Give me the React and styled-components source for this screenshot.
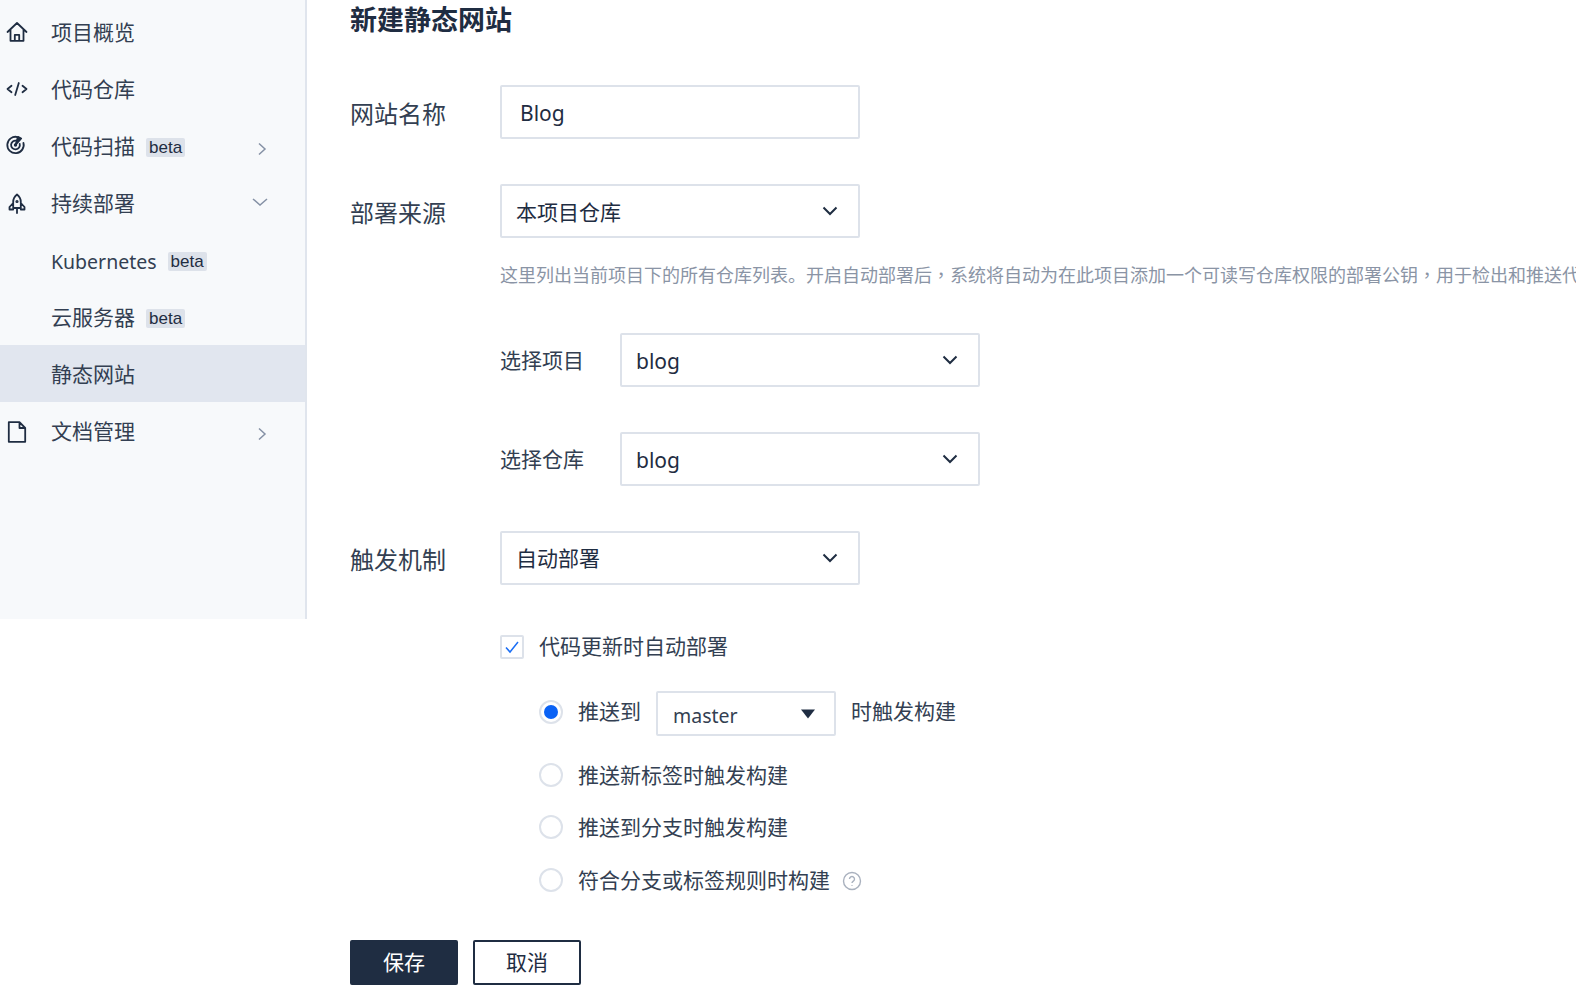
import React from "react";
import styled, { createGlobalStyle } from "styled-components";

const Global = createGlobalStyle`
  html, body { margin: 0; padding: 0; background: #fff; }
  body { font-family: "Noto Sans", "Noto Sans CJK SC", sans-serif; color: #1f2d42; }
  * { box-sizing: border-box; }
`;

const Page = styled.div`
  display: flex;
  align-items: flex-start;
  width: 1576px;
  height: 994px;
  overflow: hidden;
`;
const Sidebar = styled.nav`
  flex: none;
  width: 307px;
  height: 619px;
  padding-top: 3px;
  background: #f7f9fb;
  border-right: 2px solid #e0e5ed;
`;
const NavRow = styled.div`
  display: flex;
  align-items: center;
  height: 57px;
  padding-left: ${(p) => (p.$sub ? "51px" : "6px")};
  font-size: 21px;
  color: #333f52;
  background: ${(p) => (p.$active ? "#e1e6ef" : "transparent")};
`;
const NavText = styled.span`
  margin-bottom: 2px;
`;
const NavLatin = styled.span`
  margin-top: 3px;
  font-size: 19.5px;
`;
const NavIcon = styled.svg`
  flex: none;
  width: 22px;
  height: 22px;
  margin-right: 23px;
  margin-top: ${(p) => p.$dy || 0}px;
  fill: none;
  stroke: #1f2d42;
  stroke-width: 1.8;
  stroke-linecap: round;
  stroke-linejoin: round;
`;
const Beta = styled.span`
  margin-left: 11px;
  margin-top: 4px;
  padding: 0 3px;
  height: 19px;
  line-height: 19px;
  border-radius: 2px;
  background: #dde2ea;
  color: #1f2d42;
  font-family: "Liberation Sans", sans-serif;
  font-size: 17px;
`;
const Chevron = styled.svg`
  margin-left: auto;
  margin-right: ${(p) => p.$mr}px;
  margin-top: ${(p) => p.$dy || 0}px;
  width: 16px;
  height: 16px;
  fill: none;
  stroke: #8591a5;
  stroke-width: 1.5;
`;
const Main = styled.main`
  flex: none;
  width: 1269px;
  padding-left: 43px;
`;
const Title = styled.h1`
  margin: 0;
  height: 40px;
  font-size: 27px;
  line-height: 39px;
  font-weight: 700;
  color: #1f2d42;
`;
const FormRow = styled.div`
  display: flex;
  align-items: center;
  margin-top: ${(p) => p.$mt}px;
`;
const Label = styled.label`
  flex: none;
  width: 150px;
  font-size: 24px;
  line-height: 34px;
  color: #333f52;
  padding-top: 3px;
`;
const Indented = styled.div`
  margin-left: 150px;
`;
const SubLabel = styled.label`
  flex: none;
  width: 120px;
  margin-bottom: 2px;
  font-size: 21px;
  color: #333f52;
`;
const Field = styled.div`
  display: flex;
  align-items: center;
  justify-content: space-between;
  width: 360px;
  height: 54px;
  padding: 0 19px 0 14px;
  border: 2px solid #dde2ea;
  border-radius: 2px;
  background: #fff;
  font-size: 21px;
  color: #1f2d42;
`;
const NameField = styled(Field)`
  padding-left: 18px;
  padding-top: 2px;
`;
const Latin = styled.span`
  padding-top: 2px;
`;
const Arrow = styled.svg`
  width: 18px;
  height: 18px;
  fill: none;
  stroke: #1f2d42;
  stroke-width: 2;
`;
const Help = styled.p`
  margin: 23px 0 0;
  height: 27px;
  line-height: 26px;
  font-size: 18px;
  color: #8a94a5;
  white-space: nowrap;
`;
const CenteredComma = styled.span`
  font-family: "Noto Sans CJK TC", sans-serif;
`;
const CheckRow = styled.div`
  display: flex;
  align-items: center;
  margin-top: 46px;
  height: 32px;
  font-size: 21px;
  color: #333f52;
`;
const RowText = styled.span`
  margin-bottom: ${(p) => p.$up || 2}px;
`;
const CheckBox = styled.span`
  display: flex;
  align-items: center;
  justify-content: center;
  width: 24px;
  height: 24px;
  margin-right: 15px;
  border: 2px solid #dde2ea;
  border-radius: 2px;
`;
const RadioRow = styled.div`
  display: flex;
  align-items: center;
  margin: ${(p) => p.$mt}px 0 0 39px;
  height: ${(p) => p.$h || 32}px;
  font-size: 21px;
  color: #333f52;
`;
const Radio = styled.span`
  flex: none;
  display: flex;
  align-items: center;
  justify-content: center;
  width: 24px;
  height: 24px;
  margin-right: 15px;
  margin-bottom: ${(p) => (p.$on ? 3 : 0)}px;
  border: 2px solid #dde2ea;
  border-radius: 50%;
  &::after {
    content: "";
    display: ${(p) => (p.$on ? "block" : "none")};
    width: 14px;
    height: 14px;
    border-radius: 50%;
    background: #0a62f5;
  }
`;
const Branch = styled.div`
  display: flex;
  align-items: center;
  justify-content: space-between;
  width: 180px;
  height: 45px;
  margin: 0 15px;
  padding: 4px 18px 0 15px;
  border: 2px solid #dde2ea;
  border-radius: 2px;
  font-size: 19.5px;
  color: #333f52;
`;
const Caret = styled.svg`
  width: 16px;
  height: 10px;
  margin-top: -4px;
  fill: #1f2d42;
`;
const HelpIcon = styled.svg`
  width: 20px;
  height: 20px;
  margin-left: 12px;
  margin-top: 1px;
  fill: none;
  stroke: #a9b1be;
  stroke-width: 1.4;
`;
const Actions = styled.div`
  display: flex;
  gap: 15px;
  margin-top: 44px;
`;
const Button = styled.button`
  width: 108px;
  height: 45px;
  padding: 0;
  border: 2px solid #1f2d42;
  border-radius: 2px;
  background: ${(p) => (p.$primary ? "#1f2d42" : "#fff")};
  color: ${(p) => (p.$primary ? "#fff" : "#1f2d42")};
  font-family: inherit;
  font-size: 21px;
  line-height: 1;
`;

const Right = () => (
  <Chevron $mr={35} $dy={7} viewBox="0 0 16 16"><path d="M5 2.5l6 5.5-6 5.5" /></Chevron>
);

const Select = ({ children }) => (
  <Field>
    {children}
    <Arrow viewBox="0 0 18 18"><path d="M2.500 5.500L9 12l6.500-6.500" /></Arrow>
  </Field>
);

export default function App() {
  return (
    <Page>
      <Global />
      <Sidebar>
        <NavRow>
          <NavIcon viewBox="0 0 22 22"><path d="M1.500 11L11 2l9.500 9M4.500 8.800v11h13v-11M8.800 19.800v-6h4.400v6" /></NavIcon>
          <NavText>项目概览</NavText>
        </NavRow>
        <NavRow>
          <NavIcon viewBox="0 0 22 22" $dy={1}><path d="M5.500 7.800L1.500 11l4 3.200M16.500 7.800l4 3.200-4 3.200M12.800 5L9.200 17" /></NavIcon>
          <NavText>代码仓库</NavText>
        </NavRow>
        <NavRow>
          <NavIcon viewBox="0 0 22 22" $dy={-1}>
            <path d="M11.500 3.050A8.200 8.200 0 1 0 17.400 8.800M10.500 6.700A4.400 4.400 0 1 0 13.700 9.800" />
            <circle cx="9.500" cy="11" r="0.800" />
            <path d="M9.500 11L12 2.800L15.200 4.500z" fill="#1f2d42" />
          </NavIcon>
          <NavText>代码扫描</NavText><Beta>beta</Beta>
          <Right />
        </NavRow>
        <NavRow>
          <NavIcon viewBox="0 0 22 22" $dy={3}>
            <path d="M11 1.500c2.600 2 3.800 4.500 3.800 7.500v6H7.200V9C7.200 6 8.400 3.500 11 1.500zM7.200 10L3.500 14v2.500h3.700M14.800 10l3.700 4v2.500h-3.700M11 15v5" />
            <circle cx="11" cy="8.500" r="0.700" />
          </NavIcon>
          <NavText>持续部署</NavText>
          <Chevron $mr={37} $dy={-1} viewBox="0 0 16 16"><path d="M1 5l7 6 7-6" /></Chevron>
        </NavRow>
        <NavRow $sub><NavLatin>Kubernetes</NavLatin><Beta>beta</Beta></NavRow>
        <NavRow $sub><NavText>云服务器</NavText><Beta>beta</Beta></NavRow>
        <NavRow $sub $active><NavText>静态网站</NavText></NavRow>
        <NavRow>
          <NavIcon viewBox="0 0 22 22" $dy={2}><path d="M2.800 1.200h10.700l5.700 5.800v13.800H2.800zM13.500 1.200V7h5.700" /></NavIcon>
          <NavText>文档管理</NavText>
          <Right />
        </NavRow>
      </Sidebar>
      <Main>
        <Title>新建静态网站</Title>
        <FormRow $mt={45}>
          <Label>网站名称</Label>
          <NameField>Blog</NameField>
        </FormRow>
        <FormRow $mt={45}>
          <Label>部署来源</Label>
          <Select>本项目仓库</Select>
        </FormRow>
        <Indented>
          <Help>这里列出当前项目下的所有仓库列表。开启自动部署后<CenteredComma>，</CenteredComma>系统将自动为在此项目添加一个可读写仓库权限的部署公钥<CenteredComma>，</CenteredComma>用于检出和推送代码</Help>
          <FormRow $mt={45}>
            <SubLabel>选择项目</SubLabel>
            <Select><Latin>blog</Latin></Select>
          </FormRow>
          <FormRow $mt={45}>
            <SubLabel>选择仓库</SubLabel>
            <Select><Latin>blog</Latin></Select>
          </FormRow>
        </Indented>
        <FormRow $mt={45}>
          <Label>触发机制</Label>
          <Select><RowText>自动部署</RowText></Select>
        </FormRow>
        <Indented>
          <CheckRow>
            <CheckBox>
              <svg width="16" height="16" viewBox="0 0 16 16" fill="none" stroke="#1a6ef5" strokeWidth="1.500"><path d="M2 8.500l4 4.500 8-10" /></svg>
            </CheckBox>
            <RowText $up={4}>代码更新时自动部署</RowText>
          </CheckRow>
          <RadioRow $mt={28} $h={45}>
            <Radio $on />
            <RowText $up={8}>推送到</RowText>
            <Branch>
              master
              <Caret viewBox="0 0 16 10"><path d="M1 0.500h14L8 9.500z" /></Caret>
            </Branch>
            <RowText $up={8}>时触发构建</RowText>
          </RadioRow>
          <RadioRow $mt={23}><Radio /><RowText>推送新标签时触发构建</RowText></RadioRow>
          <RadioRow $mt={20}><Radio /><RowText>推送到分支时触发构建</RowText></RadioRow>
          <RadioRow $mt={21}>
            <Radio /><RowText>符合分支或标签规则时构建</RowText>
            <HelpIcon viewBox="0 0 20 20">
              <circle cx="10" cy="10" r="8.500" />
              <path d="M7.500 8a2.500 2.500 0 1 1 3.800 2.100c-.9.6-1.300 1-1.300 2" />
              <path d="M10 14.200v.8" />
            </HelpIcon>
          </RadioRow>
        </Indented>
        <Actions>
          <Button $primary>保存</Button>
          <Button>取消</Button>
        </Actions>
      </Main>
    </Page>
  );
}
